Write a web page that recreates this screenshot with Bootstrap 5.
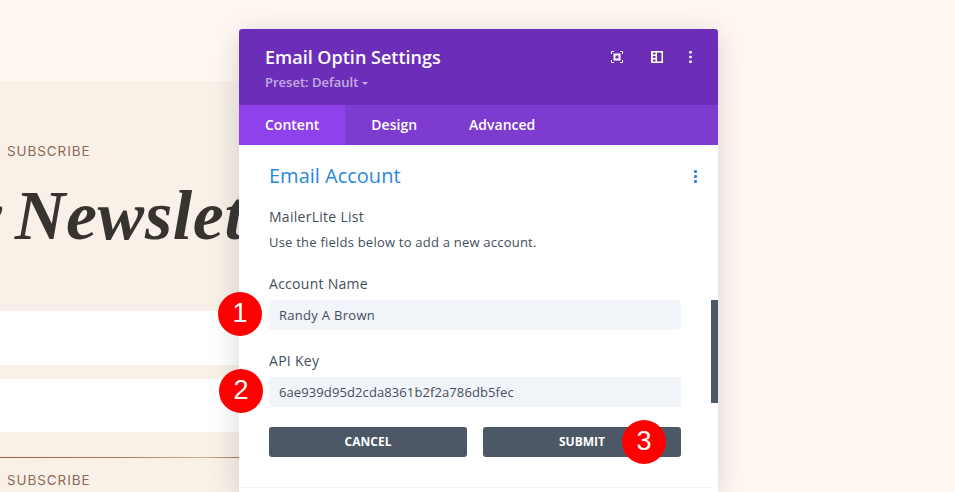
<!DOCTYPE html>
<html lang="en">
<head>
<meta charset="utf-8">
<title>Email Optin Settings</title>
<link href="https://cdn.jsdelivr.net/npm/bootstrap@5.3.0/dist/css/bootstrap.min.css" rel="stylesheet">
<style>
html,body{height:492px;overflow:hidden}
body{background:#fff8f2;font-family:"Open Sans",sans-serif;position:relative}
.bg-top{height:81px}
.bg-sect{background:#f9f1e8;height:411px;overflow:hidden;width:239px;position:relative}
.bg-sect-inner{padding-top:61px;width:239px}
.sub-lbl{font-family:"Inter","Lato",sans-serif;font-size:13.5px;line-height:18px;color:#8d6a58;padding-left:7px;letter-spacing:.9px;font-weight:400;white-space:nowrap}
.news-h{font-family:"Liberation Serif",serif;font-style:italic;font-weight:700;font-size:70px;line-height:80px;color:#37342f;white-space:nowrap;margin:16px 0 0 -29px;letter-spacing:.6px;word-spacing:-6px;height:80px}
.fake-field{background:#fff}
.fake-a{margin-top:55px;height:54px}
.fake-b{margin-top:14px;height:53px}
.divide{height:1px;margin-top:25px;background:linear-gradient(90deg,#a05f48,#ab7a58 50%,#cdb48c 85%,#a0704e)}
.sub-b{margin-top:13px}
.panel{position:absolute;left:239px;top:29px;width:479px;height:463px;border:0;border-radius:3px 3px 0 0;background:#fff;box-shadow:0 5px 30px rgba(43,53,80,.2);overflow:hidden}
.panel-head{background:#6c2eb9;height:76px;padding:16px 0 0 26px;position:relative}
.panel-title{color:#fff;font-size:18px;font-weight:600;line-height:24px}
.panel-preset{color:rgba(255,255,255,.62);font-size:13px;font-weight:600;line-height:16px;margin-top:5px}
.caret{display:inline-block;border-style:solid;border-width:3px 3px 0;border-color:rgba(255,255,255,.62) transparent transparent;vertical-align:2px;margin-left:4px}
.head-icons{position:absolute;top:22px;left:0;width:100%;height:16px}
.head-icons svg{position:absolute;top:0}
.tabs-row{background:#7d3bcf;height:40px;flex-wrap:nowrap}
.tabs-row .nav-link{color:#fff;font-size:14px;font-weight:600;line-height:40px;padding:0 26px;height:40px;border-radius:0}
.tabs-row .nav-link.active{background:#8f42ec}
.panel-body{padding:0 37px 0 30px;position:relative;flex:1}
.sect-title{font-size:20px;line-height:26px;color:#2b87da;font-weight:400;margin:18px 0 0}
.dots-blue{position:absolute;right:21px;top:25px}
.fld-head{font-size:14px;font-weight:500;color:#434e5b;line-height:20px;margin:0;letter-spacing:.28px}
.fld-note{font-size:13px;font-weight:500;color:#434e5b;line-height:18px;margin:6px 0 0;letter-spacing:.22px}
.f-input.form-control{background:#f1f5f9;border:0;border-radius:3px;height:30px;padding:0 10px;font-size:13px;font-weight:500;color:#434e5b;box-shadow:none;min-height:0}
.f-name.form-control{letter-spacing:.3px}
.f-key.form-control{letter-spacing:.1px}
.btn-dk.btn{background:#4c5866;border:0;color:#fff;height:30px;border-radius:3px;font-size:12px;font-weight:700;padding:0;line-height:30px;text-transform:uppercase}
.gap-top{margin-top:18px}
.gap-acc{margin-top:23px}
.gap-f1{margin-top:6px}
.gap-api{margin-top:21px}
.gap-btn{margin-top:20px}
.scroll-thumb{position:absolute;right:0;top:271px;width:7px;height:103px;background:#4c5866}
.foot-line{position:absolute;left:0;right:7px;top:458px;height:1px;background:#f1f3f5}
.pin{position:absolute;width:44px;height:44px;border-radius:50%;background:#f00;color:#fff;font-family:"Liberation Sans",sans-serif;font-size:27px;line-height:42px;text-align:center}
.pin1{left:218px;top:292px}
.pin2{left:219px;top:369px}
.pin3{left:622px;top:420px}
</style>
</head>
<body>
<div class="bg-top"></div>
<div class="bg-sect">
  <div class="bg-sect-inner">
    <div class="sub-lbl">SUBSCRIBE</div>
    <div class="news-h">y Newslett</div>
    <div class="fake-field fake-a"></div>
    <div class="fake-field fake-b"></div>
    <div class="divide"></div>
    <div class="sub-lbl sub-b">SUBSCRIBE</div>
  </div>
</div>

<div class="card panel d-flex flex-column">
  <div class="panel-head">
    <div class="panel-title">Email Optin Settings</div>
    <div class="panel-preset">Preset: Default<span class="caret"></span></div>
    <div class="head-icons">
      <svg style="left:372px" width="12" height="12" viewBox="0 0 12 12" fill="none" stroke="#fff"><path d="M.5 3V.5H3M9 .5h2.500V3M11.500 9v2.500H9M3 11.500H.5V9"/><rect x="3.500" y="3.500" width="5" height="5" stroke-width="2"/></svg>
      <svg style="left:412px" width="12" height="12" viewBox="0 0 12 12"><path fill="#fff" fill-rule="evenodd" d="M0 0h12v12H0zM6 1.500v9h4.500v-9zM2 1.500v2h2.500v-2zM2 5v2h2.500V5zM2 8.500v2h2.500v-2z"/></svg>
      <svg style="left:450px" width="3" height="12" viewBox="0 0 3 12"><g fill="#f2ecfa"><rect width="3" height="2.500" rx="1"/><rect y="4.700" width="3" height="2.500" rx="1"/><rect y="9.500" width="3" height="2.500" rx="1"/></g></svg>
    </div>
  </div>
  <nav class="nav tabs-row">
    <a class="nav-link active" href="#">Content</a>
    <a class="nav-link" href="#">Design</a>
    <a class="nav-link" href="#">Advanced</a>
  </nav>
  <div class="panel-body">
    <h2 class="sect-title">Email Account</h2>
    <svg class="dots-blue" width="3" height="13" viewBox="0 0 3 13"><g fill="#2b87da"><rect width="3" height="3" rx="1"/><rect y="5" width="3" height="3" rx="1"/><rect y="10" width="3" height="3" rx="1"/></g></svg>
    <p class="fld-head gap-top">MailerLite List</p>
    <p class="fld-note">Use the fields below to add a new account.</p>
    <div class="gap-acc">
      <label class="fld-head d-block">Account Name</label>
      <input class="form-control f-input f-name gap-f1" value="Randy A Brown">
    </div>
    <div class="gap-api">
      <label class="fld-head d-block">API Key</label>
      <input class="form-control f-input f-key gap-f1" value="6ae939d95d2cda8361b2f2a786db5fec">
    </div>
    <div class="d-flex gap-3 gap-btn">
      <button class="btn btn-dk flex-fill w-50">Cancel</button>
      <button class="btn btn-dk flex-fill w-50">Submit</button>
    </div>
  </div>
  <div class="scroll-thumb"></div>
  <div class="foot-line"></div>
</div>

<div class="pin pin1">1</div>
<div class="pin pin2">2</div>
<div class="pin pin3">3</div>
<script src="https://cdn.jsdelivr.net/npm/bootstrap@5.3.0/dist/js/bootstrap.bundle.min.js"></script>
</body>
</html>
